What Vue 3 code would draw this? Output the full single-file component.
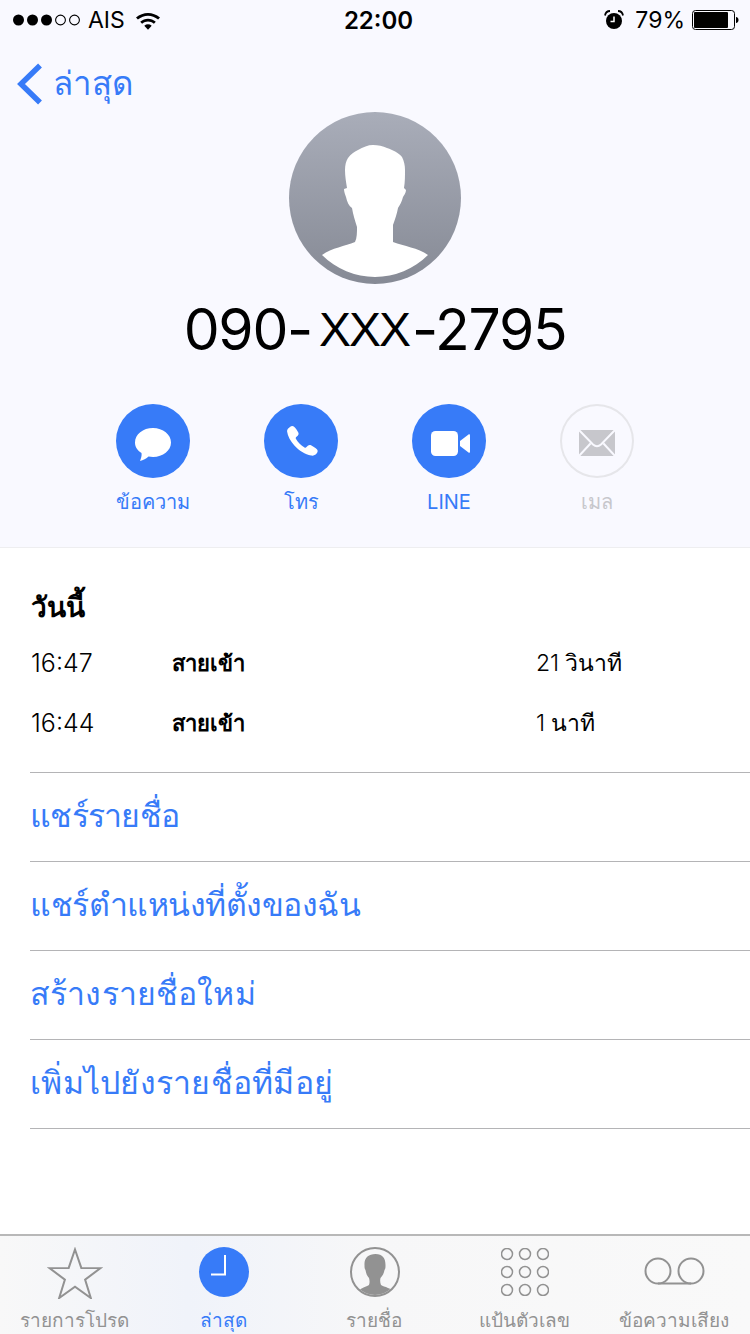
<script setup>
const actions = [
  { label: 'ข้อความ', icon: 'msg' },
  { label: 'โทร', icon: 'call' },
  { label: 'LINE', icon: 'video' },
  { label: 'เมล', icon: 'mail', off: true },
]
const calls = [
  { t: '16:47', k: 'สายเข้า', d: '21 วินาที' },
  { t: '16:44', k: 'สายเข้า', d: '1 นาที' },
]
const links = ['แชร์รายชื่อ', 'แชร์ตำแหน่งที่ตั้งของฉัน', 'สร้างรายชื่อใหม่', 'เพิ่มไปยังรายชื่อที่มีอยู่']
const tabs = [
  { label: 'รายการโปรด', icon: 'star' },
  { label: 'ล่าสุด', icon: 'clock', on: true },
  { label: 'รายชื่อ', icon: 'person' },
  { label: 'แป้นตัวเลข', icon: 'keys' },
  { label: 'ข้อความเสียง', icon: 'vm' },
]
const keys = [0, 1, 2].flatMap(r => [0, 1, 2].map(c => ({ x: 6 + c * 18, y: 6 + r * 18 })))
</script>

<template>
  <div class="page">
    <header class="head">
      <div class="status">
        <div class="st-left">
          <svg width="68" height="12" viewBox="0 0 68 12" class="dots">
            <circle cx="5.500" cy="6" r="5.500" fill="#000"/><circle cx="19.500" cy="6" r="5.500" fill="#000"/><circle cx="33.500" cy="6" r="5.500" fill="#000"/>
            <circle cx="47.500" cy="6" r="4.900" fill="none" stroke="#000" stroke-width="1.100"/><circle cx="61.500" cy="6" r="4.900" fill="none" stroke="#000" stroke-width="1.100"/>
          </svg>
          <span class="carrier">AIS</span>
          <svg width="26" height="19" viewBox="0 0 26 19" class="wifi">
            <path d="M1 6.500C8 .5 18 .5 25 6.500l-1.900 2C17 3.400 9 3.400 2.900 8.500z" fill="#000"/>
            <path d="M5.200 10.700c4.700-4 10.900-4 15.600 0l-1.900 2c-3.600-2.900-8.200-2.900-11.800 0z" fill="#000"/>
            <path d="M9.300 14.700c2.300-1.800 5.100-1.800 7.400 0L13 18.800z" fill="#000"/>
          </svg>
        </div>
        <div class="st-time">22:00</div>
        <div class="st-right">
          <svg width="22" height="22" viewBox="0 0 22 22" class="alarm">
            <circle cx="11" cy="12" r="8" fill="#000"/>
            <path d="M11 7.500V12.500H7.500" fill="none" stroke="#fff" stroke-width="1.500"/>
            <path d="M2 6.500C2.500 3.500 4.500 2 7 2M20 6.500C19.500 3.500 17.500 2 15 2" fill="none" stroke="#000" stroke-width="1.800"/>
          </svg>
          <span class="pct">79%</span>
          <svg width="47" height="20" viewBox="0 0 47 20" class="batt">
            <rect x="0.500" y="0.500" width="42" height="19" rx="3" fill="none" stroke="#000"/>
            <rect x="2" y="2" width="34" height="16" rx="1" fill="#000"/>
            <path d="M44 7c1.600.2 2.500 1.300 2.500 3s-.9 2.800-2.500 3z" fill="#000"/>
          </svg>
        </div>
      </div>
      <div class="nav">
        <svg width="28" height="44" viewBox="0 0 28 44" class="chev">
          <path d="M25 3.500L6 22l19 18.500" fill="none" stroke="#377bf8" stroke-width="5.500"/>
        </svg>
        <span class="back">ล่าสุด</span>
      </div>
      <div class="avatar">
        <svg width="172" height="172" viewBox="0 0 172 172">
          <defs>
            <linearGradient id="ag" x1="0" y1="0" x2="0" y2="1">
              <stop offset="0" stop-color="#a9adb9"/><stop offset="1" stop-color="#868a95"/>
            </linearGradient>
          </defs>
          <circle cx="86" cy="86" r="86" fill="url(#ag)"/>
          <path d="M33 143C43 136 56 134 66 130C68 126 68 120 68 115C66 109 64 102 63 96C60 94 58 90 57 85C56 82 55 80 55 77L58 76C57 70 56 64 56 58C56 53 57 49 59 46C62 42 65 40 69 38C74 35 79 33 84 33C89 33 94 34 98 36C104 38 110 41 113 45C115 49 116 53 116 58C116 64 116 70 115 76L117 78C117 81 115 83 114 85C113 89 111 93 109 96C108 102 106 107 104 113C104 119 104 125 104 130C115 134 129 136 139 143A75 75 0 0 1 33 143Z" fill="#fff"/>
        </svg>
      </div>
      <h1 class="num"><span>090-</span><span class="xxx">XXX</span><span>-2795</span></h1>
      <div class="actions">
        <div v-for="a in actions" :key="a.label" class="action" :class="{ off: a.off }">
          <div class="circle">
            <svg v-if="a.icon === 'msg'" width="74" height="74" viewBox="0 0 74 74">
              <path d="M37 24c-10 0-18 6.300-18 14.500 0 4.500 2.500 8 6.500 10.500.5 2.500-.5 5.500-1.500 8 3-.8 6.500-2.500 8.500-4.500 1.500.3 3 .5 4.500.5 10 0 18-6.500 18-14.500S47 24 37 24z" fill="#fff"/>
            </svg>
            <svg v-else-if="a.icon === 'call'" width="74" height="74" viewBox="0 0 74 74">
              <path transform="translate(0 1.500)" d="M26 21.500c1-1 2.700-1.500 3.800-.5 1.800 1.500 3.500 4 4.500 6 .6 1.200.2 2.300-.6 3.200l-1.500 1.300c-.6.600-.6 1.200-.2 1.900 2 3.400 5 6.500 8.500 8.500.8.400 1.400.3 2-.3l1.300-1.300c1-.9 2-1.200 3.200-.6 2.200 1.100 4.500 2.600 6.100 4.400 1 1.200.6 3-.5 4-1.500 1.700-3.500 2.500-5.500 2-6-1.200-12-5-16.500-9.800-4-4.400-7-9.700-7.500-14.300-.2-1.800 1-3.300 2.900-4.500z" fill="#fff"/>
            </svg>
            <svg v-else-if="a.icon === 'video'" width="74" height="74" viewBox="0 0 74 74">
              <rect x="19" y="27" width="27" height="25" rx="4.500" fill="#fff"/>
              <path d="M48 37l8.500-6.500c.6-.4 1.500-.2 1.500.8v16.400c0 1-.9 1.200-1.500.8L48 42z" fill="#fff"/>
            </svg>
            <svg v-else width="74" height="74" viewBox="0 0 74 74">
              <rect x="19" y="26" width="36" height="26" fill="#c7c7cc"/>
              <path d="M18 25L33 40.500Q37 44 41 40.500L56 25M18 53L30.500 39.500M56 53L43.500 39.500" fill="none" stroke="#f9f9ff" stroke-width="2"/>
            </svg>
          </div>
          <span class="a-label">{{ a.label }}</span>
        </div>
      </div>
    </header>

    <section class="calls">
      <h2 class="today">วันนี้</h2>
      <div v-for="c in calls" :key="c.t" class="call">
        <span class="c-time">{{ c.t }}</span>
        <span class="c-kind">{{ c.k }}</span>
        <span class="c-dur">{{ c.d }}</span>
      </div>
    </section>

    <ul class="links">
      <li v-for="l in links" :key="l">{{ l }}</li>
    </ul>

    <nav class="tabbar">
      <div v-for="t in tabs" :key="t.label" class="tab" :class="{ on: t.on }">
        <div class="t-icon">
          <svg v-if="t.icon === 'star'" width="56" height="52" viewBox="0 0 56 52" class="star">
            <path d="M28 2.500l6.300 18.400 19.200.2-15.400 11.500 5.700 18.400L28 39.700 12.200 51l5.700-18.400L2.500 21.100l19.200-.2z" fill="none" stroke="#929292" stroke-width="2"/>
          </svg>
          <svg v-else-if="t.icon === 'clock'" width="50" height="50" viewBox="0 0 50 50" class="clock">
            <circle cx="25" cy="25" r="25" fill="#377bf8"/>
            <path d="M26 8v19.500H12" fill="none" stroke="#fff" stroke-width="2"/>
          </svg>
          <svg v-else-if="t.icon === 'person'" width="50" height="50" viewBox="0 0 50 50">
            <defs><clipPath id="pc"><circle cx="25" cy="25" r="23"/></clipPath></defs>
            <circle cx="25" cy="25" r="24" fill="none" stroke="#929292" stroke-width="2"/>
            <path clip-path="url(#pc)" d="M6 46c2-4 10-6 13-8 1-3 .5-5 0-7-2-2-3-5-3.500-8-1-1-1-3-1-5-.5-7 4-11 11-11 7 0 10 4 10 11 0 2 0 4-1 5-.5 3-2 6-4 8-.5 2-.5 4.500.5 7 3 2 11 3 14 8v6H6z" fill="#929292"/>
          </svg>
          <svg v-else-if="t.icon === 'keys'" width="48" height="48" viewBox="0 0 48 48">
            <circle v-for="(p, i) in keys" :key="i" :cx="p.x" :cy="p.y" r="5.500" fill="none" stroke="#929292" stroke-width="1.500"/>
          </svg>
          <svg v-else width="64" height="30" viewBox="0 0 64 30">
            <circle cx="15" cy="14" r="12.500" fill="none" stroke="#929292" stroke-width="2"/>
            <circle cx="48" cy="14" r="12.500" fill="none" stroke="#929292" stroke-width="2"/>
            <path d="M15 26.500h33" stroke="#929292" stroke-width="2"/>
          </svg>
        </div>
        <span class="t-label">{{ t.label }}</span>
      </div>
    </nav>
  </div>
</template>

<style>
html, body { margin: 0; background: #fff; }
</style>

<style scoped>
.page {
  width: 750px;
  height: 1334px;
  display: flex;
  flex-direction: column;
  overflow: hidden;
  background: #fff;
  font-family: "Noto Sans", "Liberation Sans", sans-serif;
}
.head {
  height: 547px;
  flex: none;
  background: #f9f9ff;
  border-bottom: 1px solid #eeeef0;
  display: flex;
  flex-direction: column;
  align-items: center;
}
.status {
  align-self: stretch;
  height: 40px;
  display: grid;
  grid-template-columns: 1fr auto 1fr;
  align-items: center;
  font-family: Inter, "Liberation Sans", sans-serif;
  font-size: 23px;
  color: #000;
}
.st-left { display: flex; align-items: center; padding-left: 13px; gap: 7px; }
.wifi { margin-left: 3px; }
.st-time { font-weight: 600; font-size: 24px; padding-left: 7px; }
.st-right { display: flex; align-items: center; justify-content: flex-end; gap: 8px; padding-right: 11px; }
.pct { margin-left: 2px; margin-right: -1px; }
.nav {
  align-self: stretch;
  height: 72px;
  box-sizing: border-box;
  padding: 16px 0 0 15px;
  display: flex;
  align-items: center;
  gap: 10px;
  color: #377bf8;
}
.back { font-size: 33px; line-height: 44px; margin-top: -2px; }
.avatar { height: 172px; }
.avatar svg { display: block; }
.num {
  margin: 11px 0 0;
  font-family: Inter, "Liberation Sans", sans-serif;
  font-weight: 400;
  font-size: 57px;
  line-height: 70px;
  letter-spacing: -1.3px;
  color: #000;
  display: flex;
  white-space: nowrap;
}
.xxx { font-family: "Liberation Sans", sans-serif; letter-spacing: -2px; font-size: 48px; align-self: center; margin: 0 3px 0 7px; }
.actions { display: flex; gap: 74px; margin-top: 39px; }
.action { width: 74px; display: flex; flex-direction: column; align-items: center; color: #377bf8; }
.circle { width: 74px; height: 74px; border-radius: 50%; background: #377bf8; }
.circle svg { display: block; }
.action.off { color: #c7c7cc; }
.action.off .circle { background: transparent; box-shadow: inset 0 0 0 2px #e6e6ea; }
.a-label { font-family: Inter, "Noto Sans", sans-serif; font-size: 20px; line-height: 30px; margin-top: 9px; white-space: nowrap; }
.calls { height: 224px; flex: none; padding: 36px 0 0 31px; box-sizing: border-box; }
.today { margin: 0 0 5px; font-size: 28px; line-height: 44px; font-weight: 600; color: #000; }
.call { display: grid; grid-template-columns: 141px 364px auto; height: 60px; align-items: center; font-family: Inter, "Noto Sans", sans-serif; font-size: 23px; color: #000; }
.c-time { font-size: 25px; font-weight: 300; }
.c-kind { font-weight: 700; font-size: 22px; }
.c-dur { word-spacing: -1px; font-weight: 300; }
.links { list-style: none; margin: 0 0 0 30px; padding: 0; }
.links li {
  height: 89px;
  box-sizing: border-box;
  border-top: 1px solid #b4b4b6;
  font-size: 32px;
  line-height: 84px;
  color: #377bf8;
}
.links li:nth-child(1) { letter-spacing: -0.75px; }
.links li:nth-child(2) { letter-spacing: -0.5px; }
.links li:nth-child(3) { letter-spacing: 0.15px; }
.links li:nth-child(4) { letter-spacing: 0.25px; }
.links li:last-child { height: 90px; border-bottom: 1px solid #b4b4b6; }
.tabbar {
  margin-top: auto;
  height: 100px;
  flex: none;
  box-sizing: border-box;
  border-top: 2px solid #b8b8b8;
  background: linear-gradient(90deg, #f8f8f8, #f0f3fa 25%, #f7f7f8 50%, #f9f9f9);
  display: grid;
  grid-template-columns: repeat(5, 150px);
}
.tab { display: flex; flex-direction: column; align-items: center; color: #929292; }
.tab.on { color: #377bf8; }
.t-icon { height: 61px; display: flex; align-items: center; justify-content: center; }
.t-icon svg { display: block; margin-top: 11px; }
.t-icon .star { margin-top: 13px; }
.t-icon .clock { margin-left: -2px; }
.t-label { font-size: 19px; line-height: 30px; margin: 8px 2px 0 0; white-space: nowrap; }
.tab.on .t-label { margin-right: 4px; }
</style>
